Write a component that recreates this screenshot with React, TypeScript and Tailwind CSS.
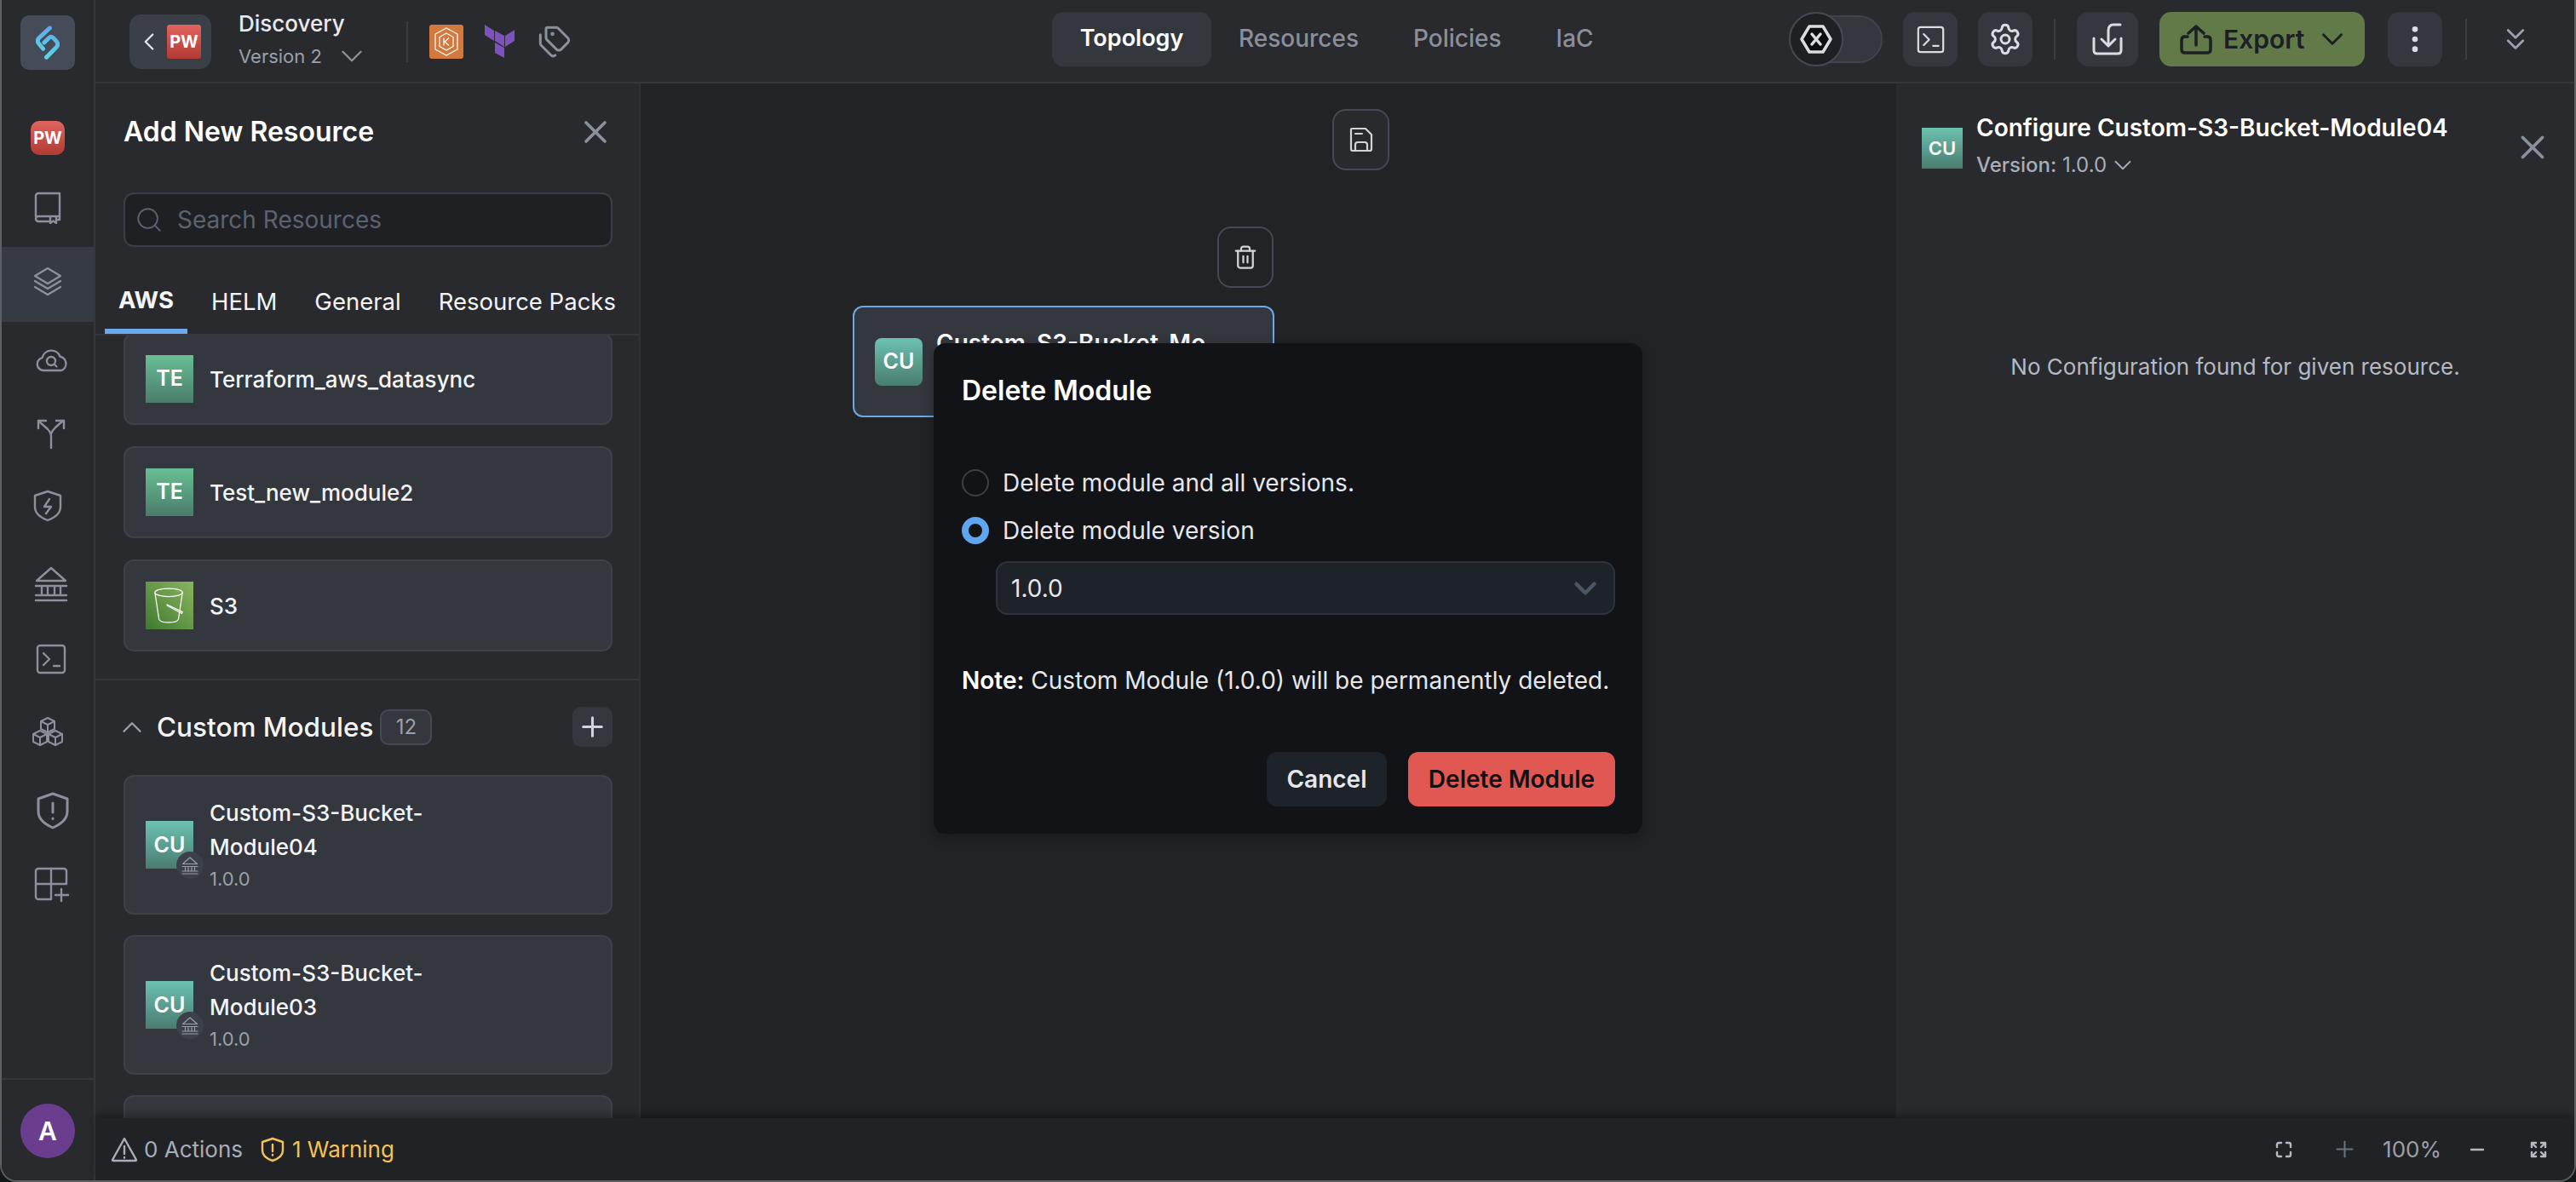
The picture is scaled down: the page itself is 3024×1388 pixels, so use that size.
import React from "react";
import { ChevronDown, ChevronLeft, ChevronUp, X, Search, Plus, Settings, EllipsisVertical, Trash2, ChevronsDown, Tags, Minus } from "lucide-react";

const Logo = () => (
  <svg width="28" height="40" viewBox="0 0 85 120" fill="none" stroke="url(#lg)" strokeWidth="15" strokeLinecap="round" strokeLinejoin="round">
    <defs>
      <linearGradient id="lg" gradientUnits="userSpaceOnUse" x1="60" y1="0" x2="20" y2="120"><stop offset="0" stopColor="#5aa6f0" /><stop offset="1" stopColor="#5fdcdf" /></linearGradient>
    </defs>
    <path d="M50 8 L11 44 Q3 54 11 64 L26 82" />
    <path d="M38 112 L74 76 Q82 66 74 56 L62 43 Q54 36 47 43 L30 60" />
  </svg>
);

const s = { fill: "none", stroke: "currentColor", strokeWidth: 2.4, strokeLinecap: "round" as const, strokeLinejoin: "round" as const };

const BookIcon = () => (
  <svg width="32" height="38" viewBox="0 0 32 38" {...s}>
    <path d="M2 29V5a3 3 0 0 1 3-3h25v27H5a3 3 0 0 0-3 3v0a3 3 0 0 0 3 3h14" />
    <path d="M19 30v7l3.500-2.500L26 37v-7" />
    <path d="M26 33h4v-4" />
  </svg>
);
const LayersIcon = () => (
  <svg width="36" height="35" viewBox="0 0 36 35" {...s}>
    <path d="M18 2 33 11 18 20 3 11Z" />
    <path d="M3 17l15 9 15-9" />
    <path d="M3 24l15 9 15-9" />
  </svg>
);
const CloudSearchIcon = () => (
  <svg width="38" height="30" viewBox="0 0 38 30" {...s}>
    <path d="M9 28a7.500 7.500 0 0 1-1.500-14.800a11 11 0 0 1 21-1.500a8.500 8.500 0 0 1 1.500 16.300Z" />
    <circle cx="18" cy="17" r="5" />
    <path d="M22 21l2.500 2.500" />
  </svg>
);
const BranchIcon = () => (
  <svg width="34" height="36" viewBox="0 0 34 36" {...s}>
    <path d="M17 34V20c0-4-2-6-4-8L3 3" />
    <path d="M2 11V2h9" />
    <path d="M17 17c1-3 3-5 5-7l9-8" />
    <path d="M23 2h9v9" />
  </svg>
);
const ShieldBoltIcon = () => (
  <svg width="34" height="38" viewBox="0 0 34 38" {...s}>
    <path d="M17 2 32 7v13c0 8-7 13-15 16C9 33 2 28 2 20V7Z" />
    <path d="M19 11l-6 9h8l-6 8" />
  </svg>
);
const BankIcon = ({ w = 40, h = 42 }: { w?: number; h?: number }) => (
  <svg width={w} height={h} viewBox="0 0 40 42" {...s}>
    <path d="M20 2 37 17H3Z" />
    <path d="M2 23h36" />
    <path d="M9 25v8M16 25v8M24 25v8M31 25v8" />
    <path d="M2 34h36M2 40h36" />
  </svg>
);
const TerminalIcon = ({ size = 36 }: { size?: number }) => (
  <svg width={size} height={size} viewBox="0 0 36 36" {...s}>
    <rect x="2" y="2" width="32" height="32" rx="3" />
    <path d="M9 11l7 7-7 7" />
    <path d="M21 26h7" />
  </svg>
);
const CubesIcon = () => (
  <svg width="38" height="36" viewBox="0 0 38 36" {...s} strokeWidth={2}>
    <path d="M19 2l8 4v9l-8 4-8-4V6Z" />
    <path d="M11 6l8 4 8-4M19 10v9" />
    <path d="M10 17l8 4v9l-8 4-8-4v-9Z" />
    <path d="M2 21l8 4 8-4M10 25v9" />
    <path d="M28 17l8 4v9l-8 4-8-4v-9Z" />
    <path d="M20 21l8 4 8-4M28 25v9" />
  </svg>
);
const ShieldAlertIcon = () => (
  <svg width="40" height="44" viewBox="0 0 40 44" {...s} strokeWidth={3}>
    <path d="M20 2 37 8v15c0 9-8 15-17 19C11 38 3 32 3 23V8Z" />
    <path d="M20 13v11M20 31v.5" />
  </svg>
);
const GridPlusIcon = () => (
  <svg width="42" height="42" viewBox="0 0 42 42" {...s}>
    <path d="M20 38H5a3 3 0 0 1-3-3V5a3 3 0 0 1 3-3h30a3 3 0 0 1 3 3v15H2" />
    <path d="M20 2v36" />
    <path d="M32 26v14M25 33h15" />
  </svg>
);
const SaveIcon = () => (
  <svg width="30" height="30" viewBox="0 0 30 30" {...s} strokeWidth={2.2}>
    <path d="M4 2h16l7 7v17a2 2 0 0 1-2 2H5a2 2 0 0 1-2-2V3a1 1 0 0 1 1-1Z" />
    <path d="M8 8h8" />
    <path d="M8 28v-7a3 3 0 0 1 3-3h8a3 3 0 0 1 3 3v7" />
  </svg>
);
const ImportIcon = () => (
  <svg width="36" height="38" viewBox="0 0 36 38" {...s} strokeWidth={3}>
    <path d="M2 18V32Q2 36 6 36H30Q34 36 34 32V18" />
    <path d="M33 2H25Q19 2 19 9V26" />
    <path d="M11 19 19 27 27 19" />
  </svg>
);
const ExportIcon = () => (
  <svg width="38" height="35" viewBox="0 0 38 35" {...s} strokeWidth={3.500}>
    <path d="M9 14H6Q2 14 2 18V29Q2 33 6 33H32Q36 33 36 29V18Q36 14 32 14H29" />
    <path d="M19 24V3" />
    <path d="M10 10 19 2 28 10" />
  </svg>
);
const HexIcon = () => (
  <svg width="38" height="36" viewBox="0 0 38 36">
    <path d="M11 3h16l9 15-9 15H11L2 18Z" fill="#0d0e10" stroke="#d9dce2" strokeWidth="3.500" strokeLinejoin="round" />
    <path d="M14 12l10 12M24 12 14 24" stroke="#d9dce2" strokeWidth="3.500" strokeLinecap="round" />
  </svg>
);
const WarnIcon = () => (
  <svg width="32" height="30" viewBox="0 0 32 30" {...s}>
    <path d="M16 2 30 27a1 1 0 0 1-1 1H3a1 1 0 0 1-1-1Z" />
    <path d="M16 11v9M16 24v.5" />
  </svg>
);
const ShieldWarn = () => (
  <svg width="28" height="30" viewBox="0 0 28 30" {...s}>
    <path d="M14 2 26 6v10c0 6-6 10-12 12C8 26 2 22 2 16V6Z" />
    <path d="M14 9v8M14 21v.5" />
  </svg>
);
const FitIcon = () => (
  <svg width="20" height="20" viewBox="0 0 20 20" {...s}>
    <path d="M2 7V4a2 2 0 0 1 2-2h3M13 2h3a2 2 0 0 1 2 2v3M18 13v3a2 2 0 0 1-2 2h-3M7 18H4a2 2 0 0 1-2-2v-3" />
  </svg>
);
const ExpandIcon = () => (
  <svg width="20" height="20" viewBox="0 0 20 20" {...s}>
    <path d="M2 7V2h5M2 2l5 5M13 2h5v5M18 2l-5 5M18 13v5h-5M18 18l-5-5M7 18H2v-5M2 18l5-5" />
  </svg>
);
const Bucket = () => (
  <svg width="38" height="42" viewBox="0 0 40 44" fill="none" stroke="#fff" strokeWidth="1.300">
    <ellipse cx="19" cy="6" rx="17" ry="5" />
    <path d="M2 6l5 33c1 3 6 4 12 4s11-1 12-4l5-33" />
    <path d="M17 21l19 9-1 2-18-10Z" />
  </svg>
);
const EksIcon = () => (
  <svg width="40" height="40" viewBox="0 0 40 40" fill="none" stroke="#fff" strokeWidth="1.200" className="rounded-[3px] bg-[#d27a3e]">
    <path d="M20 4 33 11v18L20 36 7 29V11Z" />
    <path d="M20 10 28 14.500v11L20 30l-8-4.500v-11Z" />
    <path d="M17 15.500v9M23 15.500l-5 4.500 5 4.500" />
  </svg>
);
const TerraformIcon = () => (
  <svg width="36" height="40" viewBox="0 0 36 40" fill="#7d52bd">
    <path d="M0 0 11 7V19L0 12Z" />
    <path d="M12 7 23 13V26L12 19Z" />
    <path d="M24 13 35 6V19L24 26Z" />
    <path d="M12 21 23 27V39L12 33Z" />
  </svg>
);

const Tile = ({ label, grad, size = "w-[56px] h-[56px]", round = "" }: { label: string; grad: string; size?: string; round?: string }) => (
  <div className={`${size} ${grad} ${round} flex items-center justify-center text-white font-semibold text-[25px] shrink-0`}>{label}</div>
);

const TE = "bg-gradient-to-b from-[#68bf93] to-[#4a7c6b]";
const CU = "bg-gradient-to-b from-[#6cc2af] to-[#4a7d72]";

const SimpleCard = ({ label, children }: { label: string; children: React.ReactNode }) => (
  <div className="h-[108px] rounded-[12px] bg-[#34373d] border-2 border-[#3d414a] flex items-center pl-[24px] gap-[19px] shrink-0">
    {children}
    <span className="text-[26px] font-medium text-[#f3f4f6]">{label}</span>
  </div>
);

const ModuleCard = ({ a, b }: { a: string; b: string }) => (
  <div className="h-[164px] rounded-[12px] bg-[#34373d] border-2 border-[#3d414a] flex items-center pl-[24px] gap-[19px] shrink-0">
    <div className="relative">
      <Tile label="CU" grad={CU} />
      <div className="absolute left-[36px] top-[36px] w-[32px] h-[32px] rounded-full bg-[#3c4049] flex items-center justify-center text-[#9aa0ab]">
        <BankIcon w={20} h={21} />
      </div>
    </div>
    <div className="flex flex-col">
      <span className="text-[26px] leading-[40px] font-medium text-[#f3f4f6]">{a}</span>
      <span className="text-[26px] leading-[40px] font-medium text-[#f3f4f6]">{b}</span>
      <span className="text-[22px] leading-[34px] text-[#9aa0ab]">1.0.0</span>
    </div>
  </div>
);

const railItems: { el: React.ReactNode; cls: string }[] = [
  { el: <div className="w-[40px] h-[40px] mt-[8px] rounded-[10px] bg-gradient-to-b from-[#e2645f] to-[#b13a33] flex items-center justify-center text-white text-[20px] font-bold">PW</div>, cls: "" },
  { el: <BookIcon />, cls: "pb-[5px]" },
  { el: <LayersIcon />, cls: "pb-[8px] bg-[#363a42]" },
  { el: <CloudSearchIcon />, cls: "pl-[10px]" },
  { el: <BranchIcon />, cls: "pl-[8px]" },
  { el: <ShieldBoltIcon />, cls: "pb-[8px]" },
  { el: <BankIcon />, cls: "pl-[8px]" },
  { el: <TerminalIcon />, cls: "pl-[8px]" },
  { el: <CubesIcon />, cls: "pb-[6px]" },
  { el: <ShieldAlertIcon />, cls: "pl-[12px] pt-[3px]" },
  { el: <GridPlusIcon />, cls: "pl-[10px] pt-[2px]" },
];

const IconBtn = ({ children, cls = "w-[64px]" }: { children: React.ReactNode; cls?: string }) => (
  <div className={`${cls} h-[64px] rounded-[14px] bg-[#34373d] flex items-center justify-center text-[#d9dce2] shrink-0`}>{children}</div>
);

export default function App() {
  return (
    <div className="w-[3024px] h-[1388px] bg-[#12181a] overflow-hidden" style={{ fontFamily: "Inter, 'Noto Sans', sans-serif" }}>
      <div className="w-full h-full flex border-x-2 border-b-2 border-[#5c5f63] rounded-b-[20px] overflow-hidden bg-[#292a2d]">
        {/* Rail */}
        <aside className="w-[110px] shrink-0 border-r-2 border-[#34373d] bg-[#292a2d] flex flex-col">
          <div className="pt-[18px] pl-[22px] h-[114px]">
            <div className="w-[64px] h-[64px] rounded-[10px] bg-[#454b58] flex items-center justify-center"><Logo /></div>
          </div>
          <nav className="flex flex-col flex-1">
            {railItems.map((it, i) => (
              <div key={i} className={`h-[88px] flex items-center justify-center text-[#8a909c] ${it.cls}`}>{it.el}</div>
            ))}
          </nav>
          <div className="h-[120px] border-t-2 border-[#34373d] flex items-start pt-[28px] pl-[22px] shrink-0">
            <div className="w-[64px] h-[64px] rounded-full bg-[#6b3d8f] text-white flex items-center justify-center text-[30px] font-semibold">A</div>
          </div>
        </aside>

        {/* Main */}
        <div className="flex-1 flex flex-col min-w-0">
          {/* Top bar */}
          <header className="h-[98px] shrink-0 border-b-2 border-[#34373d] flex items-start pt-[14px]">
            <div className="w-[1123px] flex items-center pl-[40px] shrink-0">
              <div className="w-[96px] h-[64px] rounded-[14px] bg-[#3b4048] flex items-center pl-[6px] text-[#e5e7eb]">
                <ChevronLeft size={34} strokeWidth={1.6} />
                <div className="w-[40px] h-[40px] rounded-[3px] ml-[4px] bg-gradient-to-b from-[#e2645f] to-[#b13a33] flex items-center justify-center text-white text-[20px] font-bold">PW</div>
              </div>
              <div className="ml-[32px] flex flex-col w-[197px] -mt-[2px]">
                <span className="text-[26px] leading-[32px] font-medium text-[#e8eaee]">Discovery</span>
                <span className="text-[22px] h-[34px] leading-[34px] text-[#9aa0ab] mt-[5px] flex items-center gap-[14px]">Version 2 <ChevronDown size={42} strokeWidth={1.4} className="text-[#8a909c]" /></span>
              </div>
              <div className="w-[2px] h-[48px] bg-[#3a3d44]" />
              <div className="ml-[25px]"><EksIcon /></div>
              <div className="ml-[25px]"><TerraformIcon /></div>
              <Tags size={40} strokeWidth={1.8} className="ml-[26px] text-[#8a909c]" />
            </div>
            <div className="flex items-center text-[28px] font-medium text-[#8a8f9b]">
              <div className="h-[64px] w-[187px] rounded-[14px] bg-[#34373d] text-white font-semibold flex items-center justify-center text-[27px] pb-[2px]">Topology</div>
              <span className="ml-[32px] pb-[2px]">Resources</span>
              <span className="ml-[64px] pb-[2px]">Policies</span>
              <span className="ml-[64px] pb-[2px]">IaC</span>
            </div>
            <div className="ml-auto pr-[48px] flex items-center">
              <div className="relative w-[110px] h-[64px] shrink-0 flex items-center justify-end">
                <div className="w-[90px] h-[56px] rounded-full bg-[#34373d] border-2 border-[#3f434c]" />
                <div className="absolute left-0 top-0 w-[64px] h-[64px] rounded-full bg-[#1f2024] border-2 border-[#444955] flex items-center justify-center"><HexIcon /></div>
              </div>
              <div className="ml-[24px]"><IconBtn><TerminalIcon size={33} /></IconBtn></div>
              <div className="ml-[24px]"><IconBtn><Settings size={40} strokeWidth={1.8} /></IconBtn></div>
              <div className="ml-[25px] w-[2px] h-[48px] bg-[#3a3d44]" />
              <div className="ml-[25px]"><IconBtn cls="w-[72px]"><ImportIcon /></IconBtn></div>
              <div className="ml-[25px] w-[241px] h-[64px] rounded-[14px] bg-[#627a48] flex items-center pl-[24px] text-[#1c2025]">
                <ExportIcon />
                <span className="ml-[13px] text-[30px] font-semibold">Export</span>
                <ChevronDown size={42} strokeWidth={1.7} className="ml-[12px]" />
              </div>
              <div className="ml-[27px]"><IconBtn><EllipsisVertical size={40} strokeWidth={2} /></IconBtn></div>
              <div className="ml-[27px] w-[2px] h-[48px] bg-[#3a3d44]" />
              <ChevronsDown size={42} strokeWidth={1.6} className="ml-[36px] text-[#9aa0ab]" />
            </div>
          </header>

          {/* Middle */}
          <div className="flex-1 flex min-h-0">
            {/* Left panel */}
            <section className="w-[640px] shrink-0 bg-[#292a2d] border-r-2 border-[#2f3136] flex flex-col min-h-0">
              <div className="pl-[33px] pr-[29px] pt-[35px] flex items-center justify-between">
                <span className="text-[32px] leading-[44px] font-semibold text-white">Add New Resource</span>
                <X size={44} strokeWidth={2} className="text-[#8a909c]" />
              </div>
              <div className="ml-[33px] mr-[31px] mt-[49px] h-[64px] rounded-[12px] bg-[#1f2024] border-2 border-[#3a3f49] flex items-center pl-[11px] gap-[16px] shrink-0">
                <Search size={34} strokeWidth={1.3} className="text-[#5c6370]" />
                <span className="text-[28px] text-[#5c6370]">Search Resources</span>
              </div>
              <div className="h-[70px] mt-[34px] shrink-0 border-b-2 border-[#34373d] flex items-start text-[27.5px] text-[#f3f4f6]">
                <div className="ml-[11px] w-[97px] h-[68px] border-b-[6px] border-[#6aa9ee] flex justify-center font-bold leading-[56px]">AWS</div>
                <span className="ml-[28px] leading-[60px]">HELM</span>
                <span className="ml-[44px] leading-[60px]">General</span>
                <span className="ml-[44px] leading-[60px] whitespace-nowrap">Resource Packs</span>
              </div>
              <div className="flex-1 min-h-0 overflow-hidden flex flex-col">
                <div className="pl-[33px] pr-[31px] flex flex-col gap-[25px] -mt-[3px] shrink-0">
                  <SimpleCard label="Terraform_aws_datasync"><Tile label="TE" grad={TE} /></SimpleCard>
                  <SimpleCard label="Test_new_module2"><Tile label="TE" grad={TE} /></SimpleCard>
                  <SimpleCard label="S3">
                    <div className="w-[56px] h-[56px] bg-gradient-to-tr from-[#3f7a30] to-[#8ab560] flex items-center justify-center shrink-0"><Bucket /></div>
                  </SimpleCard>
                </div>
                <div className="mt-[32px] border-t-2 border-[#34373d] shrink-0" />
                <div className="pl-[33px] pr-[31px] pt-[31px] flex items-center shrink-0">
                  <ChevronUp size={38} strokeWidth={1.5} className="text-[#9aa0ab] -ml-[9px]" />
                  <span className="ml-[10px] text-[31.5px] font-medium text-[#f3f4f6] whitespace-nowrap">Custom Modules</span>
                  <span className="ml-[8px] w-[61px] h-[42px] rounded-[10px] bg-[#34373d] border-2 border-[#444955] flex items-center justify-center text-[24px] text-[#9aa0ab]">12</span>
                  <div className="ml-auto w-[47px] h-[47px] rounded-[10px] bg-[#34373d] flex items-center justify-center text-[#d1d5db]"><Plus size={37} strokeWidth={2} /></div>
                </div>
                <div className="pl-[33px] pr-[31px] mt-[33px] flex flex-col gap-[24px]">
                  <ModuleCard a="Custom-S3-Bucket-" b="Module04" />
                  <ModuleCard a="Custom-S3-Bucket-" b="Module03" />
                  <div className="h-[164px] rounded-[12px] bg-[#34373d] border-2 border-[#3d414a] shrink-0" />
                </div>
              </div>
            </section>

            {/* Canvas */}
            <section className="relative flex-1 bg-[#222325] min-w-0">
              <div className="absolute left-[812px] top-[30px] w-[67px] h-[72px] rounded-[16px] border-2 border-[#444955] bg-[#292a2d] flex items-center justify-center text-[#d1d5db]"><SaveIcon /></div>
              <div className="absolute left-[677px] top-[168px] w-[66px] h-[72px] rounded-[16px] border-2 border-[#444955] flex items-center justify-center text-[#d1d5db]"><Trash2 size={30} strokeWidth={1.8} /></div>
              <div className="absolute left-[249px] top-[261px] w-[495px] h-[131px] rounded-[12px] border-2 border-[#6aa9ee] bg-[#34373d] flex items-center pl-[24px] gap-[16px]">
                <Tile label="CU" grad={CU} round="rounded-[8px]" />
                <div className="flex flex-col h-[84px]">
                  <span className="text-[28px] leading-[40px] font-semibold text-white whitespace-nowrap">Custom-S3-Bucket-Mo</span>
                </div>
              </div>

              <div className="absolute left-[344px] top-[305px] w-[832px] h-[576px] rounded-[14px] bg-[#121317] shadow-[0_4px_16px_rgba(0,0,0,0.3)] pl-[33px] pr-[32px] pt-[36px]">
                <div className="text-[32px] leading-[40px] font-semibold text-white">Delete Module</div>
                <div className="mt-[72px] flex items-center gap-[16px]">
                  <div className="w-[32px] h-[32px] rounded-full border-2 border-[#3a3f49]" />
                  <span className="text-[28px] leading-[32px] text-[#e5e7eb]">Delete module and all versions.</span>
                </div>
                <div className="mt-[24px] flex items-center gap-[16px]">
                  <div className="w-[32px] h-[32px] rounded-full border-[8px] border-[#60a5f0] bg-[#121317]" />
                  <span className="text-[28px] leading-[32px] text-[#e5e7eb]">Delete module version</span>
                </div>
                <div className="mt-[20px] ml-[40px] h-[63px] rounded-[14px] bg-[#1e2229] border-2 border-[#2d323c] flex items-center justify-between pl-[16px] pr-[12px]">
                  <span className="text-[28px] text-[#e5e7eb]">1.0.0</span>
                  <ChevronDown size={42} strokeWidth={2.6} className="text-[#4b5563]" />
                </div>
                <div className="mt-[57px] text-[28px] leading-[40px] text-[#e5e7eb] whitespace-nowrap"><span className="font-semibold text-white">Note:</span> Custom Module (1.0.0) will be permanently deleted.</div>
                <div className="mt-[64px] flex justify-end gap-[25px]">
                  <div className="w-[141px] h-[64px] rounded-[12px] bg-[#1e2229] flex items-center justify-center text-[28px] font-semibold text-[#e5e7eb]">Cancel</div>
                  <div className="w-[243px] h-[64px] rounded-[12px] bg-[#e15852] flex items-center justify-center text-[28px] font-semibold text-[#101114]">Delete Module</div>
                </div>
              </div>
            </section>

            {/* Right panel */}
            <section className="w-[796px] shrink-0 bg-[#292a2d] flex flex-col">
              <div className="pl-[30px] pr-[26px] pt-[34px] flex items-start">
                <div className="mt-[18px]"><Tile label="CU" grad={CU} size="w-[48px] h-[48px] !text-[22px]" /></div>
                <div className="ml-[16px] flex flex-col">
                  <span className="text-[28px] leading-[36px] font-semibold text-white">Configure Custom-S3-Bucket-Module04</span>
                  <span className="mt-[8px] h-[36px] text-[24px] leading-[36px] text-[#a7adba] flex items-center gap-[2px]"><span><span className="font-medium">Version:</span> 1.0.0</span><ChevronDown size={34} strokeWidth={1.3} /></span>
                </div>
                <X size={46} strokeWidth={1.9} className="ml-auto mt-[18px] text-[#8a909c]" />
              </div>
              <div className="mt-[199px] text-center text-[26px] text-[#b4b9c4]">No Configuration found for given resource.</div>
            </section>
          </div>

          {/* Status bar */}
          <footer className="h-[73px] shrink-0 bg-[#212225] shadow-[0_-4px_8px_rgba(0,0,0,0.3)] z-10 flex items-center pl-[18px] pr-[32px]">
            <span className="text-[#a7adba]"><WarnIcon /></span>
            <span className="ml-[7px] text-[26px] text-[#a7adba]">0 Actions</span>
            <span className="ml-[21px] text-[#f3c35a]"><ShieldWarn /></span>
            <span className="ml-[9px] text-[26px] text-[#f3c35a]">1 Warning</span>
            <div className="ml-auto flex items-center text-[#b4b9c4]">
              <FitIcon />
              <Plus size={31} strokeWidth={1.6} className="ml-[46px] text-[#6b7280]" />
              <span className="ml-[29px] text-[26px] text-[#9aa0ab]">100%</span>
              <Minus size={24} strokeWidth={2.4} className="ml-[30px]" />
              <div className="ml-[50px]"><ExpandIcon /></div>
            </div>
          </footer>
        </div>
      </div>
    </div>
  );
}
